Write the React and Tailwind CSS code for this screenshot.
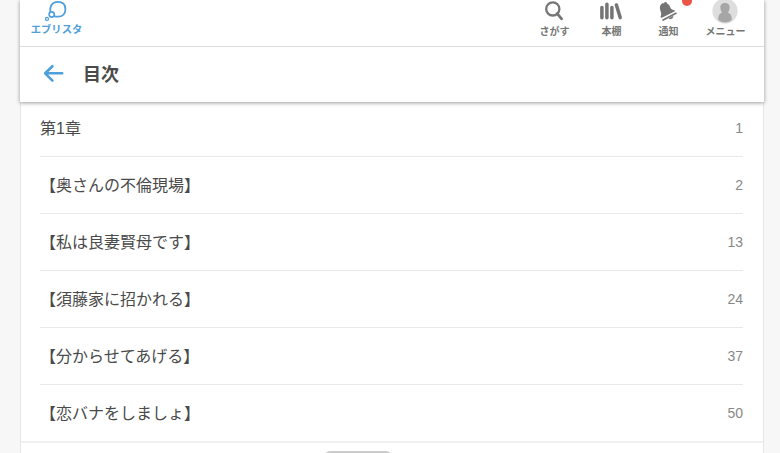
const chapters = [
  { title: "第1章", page: 1 },
  { title: "【奥さんの不倫現場】", page: 2 },
  { title: "【私は良妻賢母です】", page: 13 },
  { title: "【須藤家に招かれる】", page: 24 },
  { title: "【分からせてあげる】", page: 37 },
  { title: "【恋バナをしましょ】", page: 50 },
];

const Logo = () => (
  <a href="#" className="flex w-[52px] flex-col items-center pl-px text-[#4f9fdb]">
    <svg width="24" height="22" viewBox="0 0 24 22" fill="none" stroke="currentColor">
      <path
        d="M5.3 11.6C4.6 5.6 7.6 1.9 12.8 1.9C18 1.9 20.4 4.8 20.4 9.2C20.4 13.6 17.6 16.7 13 16.7C11.4 16.7 10.2 16.5 9.2 16.1"
        strokeWidth="1.8"
      />
      <circle cx="6.7" cy="14.5" r="2.6" strokeWidth="1.6" />
      <circle cx="2" cy="18.9" r="1.5" strokeWidth="1.3" />
    </svg>
    <span className="mt-px text-[10.3px] leading-[14px] font-bold whitespace-nowrap">エブリスタ</span>
  </a>
);

const SearchIcon = () => (
  <svg width="24" height="24" viewBox="0 0 24 24" fill="none" stroke="currentColor">
    <circle cx="10.8" cy="8.9" r="6.6" strokeWidth="2.3" />
    <path d="M15.2 13.6L19.6 18.8" strokeWidth="2.8" strokeLinecap="round" />
  </svg>
);

const ShelfIcon = () => (
  <svg width="24" height="24" viewBox="0 0 24 24" fill="none" stroke="currentColor" strokeLinecap="round">
    <path d="M2.9 7.6V17.8M7.9 4.2V17.8M12.9 7.6V17.8" strokeWidth="3.5" />
    <path d="M17.4 5L21.2 17.6" strokeWidth="3.5" />
  </svg>
);

const BellIcon = () => (
  <svg width="24" height="24" viewBox="0 0 24 24" fill="currentColor">
    <path d="M4.4 5.2C5.2 3.6 6.4 3 7.8 3.2C8.8 1.6 10.6 1.6 11 3.4C13.2 4.4 13.6 5.6 14.3 7.4C15.2 9.2 16.8 9.9 18.5 10.3C19 10.6 19 11.2 18.5 11.5L5.8 17.8C5 18 4.4 17.5 4.6 16.7C5.4 14.8 5.4 13.4 4.7 11.4C3.9 9.2 3.5 7.2 4.4 5.2Z" />
    <path d="M7.2 20L19.9 13.2" stroke="currentColor" strokeWidth="1.8" strokeLinecap="round" />
    <path d="M12.5 18.4L17.4 15.8C17.6 18.6 14.6 20.2 12.5 18.4Z" />
  </svg>
);

const UserIcon = () => (
  <svg width="26" height="26" viewBox="0 0 26 26">
    <circle cx="13" cy="13" r="12.6" fill="#dedede" />
    <path
      d="M13 5C9.6 5 8 7.4 8.4 10.3C8.6 12.3 9.3 13.6 10.2 14.4C7.5 15.3 6.2 17.4 6.2 21.8C9.7 25.4 16.3 25.4 19.8 21.8C19.8 17.4 18.5 15.3 15.8 14.4C16.7 13.6 17.4 12.3 17.6 10.3C18 7.4 16.4 5 13 5Z"
      fill="#a6a6a6"
    />
  </svg>
);

const menu = [
  { label: "さがす", icon: <SearchIcon /> },
  { label: "本棚", icon: <ShelfIcon /> },
  { label: "通知", icon: <BellIcon />, badge: true },
  { label: "メニュー", icon: <UserIcon /> },
];

const App = () => {
  return (
    <div className="h-[453px] overflow-hidden bg-[#f7f7f7] px-5 font-['Liberation_Sans','Noto_Sans_CJK_JP',sans-serif] text-[#4a4a4a]">
      <div className="w-[744px]">
        <header className="relative h-[102px] bg-white shadow-[0_1px_4px_rgba(0,0,0,0.4)]">
          <div className="flex h-[47px] items-start justify-between border-b border-[#ddd] pr-2.5 pl-2.5">
            <Logo />
            <nav className="flex text-[#757575]">
              {menu.map((item) => (
                <a key={item.label} href="#" className="relative flex w-[57px] flex-col items-center">
                  <span className="flex h-6 items-end justify-center pr-px">{item.icon}</span>
                  <span className="text-[10px] leading-[16px] font-bold whitespace-nowrap">{item.label}</span>
                  {item.badge && (
                    <span className="absolute -top-1 right-[5px] h-2.5 w-2.5 rounded-full bg-[#ea5548]"></span>
                  )}
                </a>
              ))}
            </nav>
          </div>
          <div className="flex h-[54px] items-center pl-[23px]">
            <svg
              width="22"
              height="20"
              viewBox="0 0 22 20"
              fill="none"
              stroke="#4f9fdb"
              strokeWidth="2.6"
              strokeLinecap="round"
              strokeLinejoin="round"
            >
              <path d="M19.2 9.3H2.5M9.4 2.2L2.2 9.3L9.4 16.6" />
            </svg>
            <h1 className="ml-[18px] pt-0.5 text-lg font-bold">目次</h1>
          </div>
        </header>

        <main className="h-[351px] overflow-hidden border-x border-[#e6e6e6] bg-white">
          <ul className="-mt-0.5 border-b-2 border-[#f0f0f0]">
            {chapters.map((chapter) => (
              <li
                key={chapter.page}
                className="mr-5 ml-[19px] flex h-[57px] items-center justify-between border-b border-[#e9e9e9] last:h-[56px] last:border-b-0"
              >
                <span className="pt-0.5 text-base">{chapter.title}</span>
                <span className="text-sm text-[#888]">{chapter.page}</span>
              </li>
            ))}
          </ul>
          <div className="mt-2 ml-[303px] h-10 w-[68px] rounded-md border-2 border-[#ccc] bg-white"></div>
        </main>
      </div>
    </div>
  );
};

export default App;
